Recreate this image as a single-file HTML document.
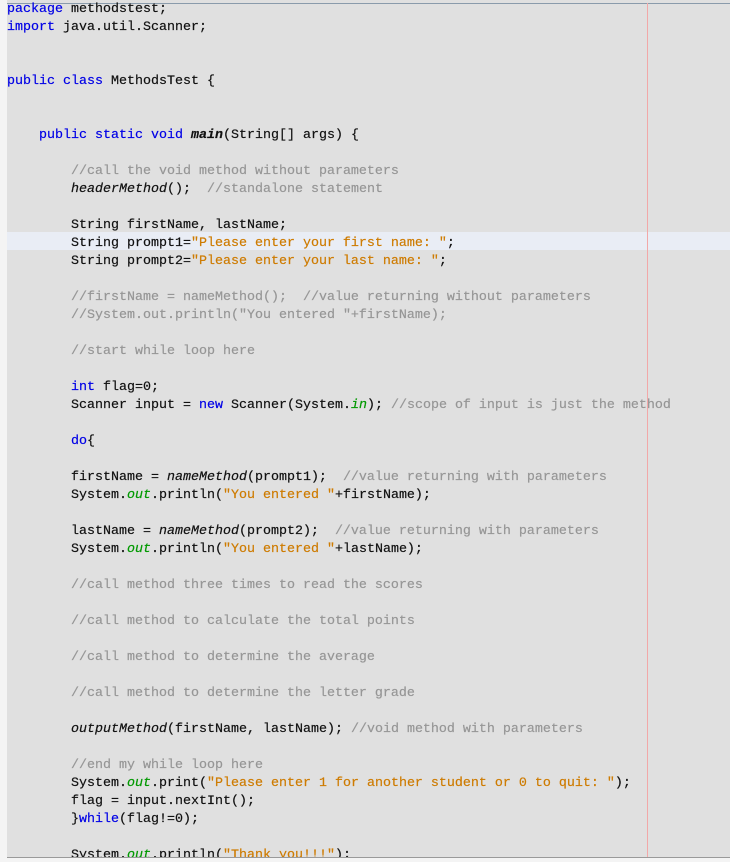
<!DOCTYPE html>
<html><head><meta charset="utf-8"><style>
html,body{margin:0;padding:0;width:730px;height:862px;overflow:hidden;background:#f4f4f4}
#ed{position:absolute;left:7px;top:0;width:723px;height:857px;background:#e0e0e0;overflow:hidden;border-bottom:1px solid #9a9a9a}
#top{position:absolute;left:0;top:3px;width:723px;height:1px;background:#8a9bab}
#margin{position:absolute;left:640px;top:3px;width:1px;height:860px;background:#f2a8a8}
#hl{position:absolute;left:0;top:232px;width:723px;height:18px;background:#e9edf5}
pre{position:absolute;left:0;top:1px;margin:0;font-family:"Liberation Mono",monospace;font-size:13.33px;line-height:18px;color:#111;-webkit-text-stroke:0.2px}
.k{color:#0000e6}.c{color:#969696}.s{color:#ce7b00}.f{color:#009900;font-style:italic}.i{font-style:italic}.b{font-weight:bold;font-style:italic}
</style></head><body><div id="ed"><div id="hl"></div><div id="top"></div><div id="margin"></div>
<pre><span class="k">package</span> methodstest;
<span class="k">import</span> java.util.Scanner;


<span class="k">public class</span> MethodsTest {


    <span class="k">public static void</span> <span class="b">main</span>(String[] args) {

        <span class="c">//call the void method without parameters</span>
        <span class="i">headerMethod</span>();  <span class="c">//standalone statement</span>

        String firstName, lastName;
        String prompt1=<span class="s">"Please enter your first name: "</span>;
        String prompt2=<span class="s">"Please enter your last name: "</span>;

        <span class="c">//firstName = nameMethod();  //value returning without parameters</span>
        <span class="c">//System.out.println("You entered "+firstName);</span>

        <span class="c">//start while loop here</span>

        <span class="k">int</span> flag=0;
        Scanner input = <span class="k">new</span> Scanner(System.<span class="f">in</span>); <span class="c">//scope of input is just the method</span>

        <span class="k">do</span>{

        firstName = <span class="i">nameMethod</span>(prompt1);  <span class="c">//value returning with parameters</span>
        System.<span class="f">out</span>.println(<span class="s">"You entered "</span>+firstName);

        lastName = <span class="i">nameMethod</span>(prompt2);  <span class="c">//value returning with parameters</span>
        System.<span class="f">out</span>.println(<span class="s">"You entered "</span>+lastName);

        <span class="c">//call method three times to read the scores</span>

        <span class="c">//call method to calculate the total points</span>

        <span class="c">//call method to determine the average</span>

        <span class="c">//call method to determine the letter grade</span>

        <span class="i">outputMethod</span>(firstName, lastName); <span class="c">//void method with parameters</span>

        <span class="c">//end my while loop here</span>
        System.<span class="f">out</span>.print(<span class="s">"Please enter 1 for another student or 0 to quit: "</span>);
        flag = input.nextInt();
        }<span class="k">while</span>(flag!=0);

        System.<span class="f">out</span>.println(<span class="s">"Thank you!!!"</span>);
</pre></div></body></html>
